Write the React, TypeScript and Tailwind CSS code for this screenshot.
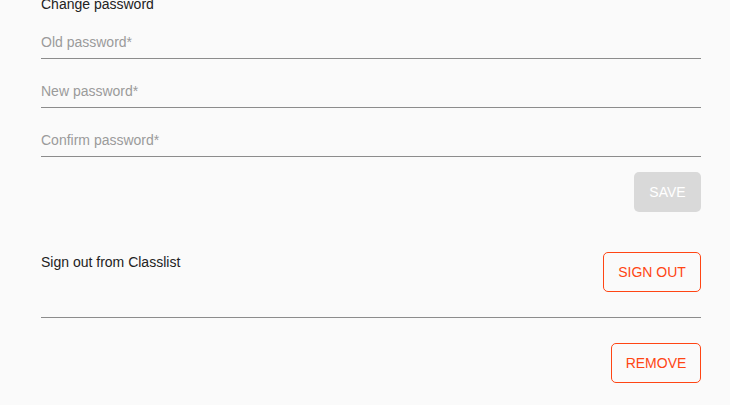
import React from "react";

const fields = ["Old password*", "New password*", "Confirm password*"];

export default function App() {
  return (
    <div className="min-h-[405px] w-[730px] bg-[#fafafa] font-['Liberation_Sans',Arial,sans-serif] overflow-hidden">
      <div className="pl-[41px] pr-[29px] mt-[-6px]">
        <div className="text-[14px] leading-[20px] text-[#222]">Change password</div>

        <div className="mt-[18px] flex flex-col gap-[22px]">
          {fields.map((f) => (
            <input
              key={f}
              type="password"
              placeholder={f}
              className="h-[27px] w-full bg-transparent pb-[6px] text-[14px] leading-[20px] text-[#333] placeholder:text-[#9b9b9b] border-b border-[#8c8c8c] outline-none"
            />
          ))}
        </div>

        <div className="mt-[15px] flex justify-end">
          <button className="h-[40px] w-[67px] rounded-[5px] bg-[#d9d9d9] text-[14px] text-white">
            SAVE
          </button>
        </div>

        <div className="mt-[40px] flex items-start justify-between border-b border-[#8c8c8c] pb-[25px]">
          <span className="text-[14px] leading-[20px] text-[#222]">Sign out from Classlist</span>
          <button className="h-[40px] w-[98px] rounded-[5px] border border-[#ff4514] text-[14px] text-[#ff4514]">
            SIGN OUT
          </button>
        </div>

        <div className="mt-[25px] flex justify-end">
          <button className="h-[40px] w-[90px] rounded-[5px] border border-[#ff4514] text-[14px] text-[#ff4514]">
            REMOVE
          </button>
        </div>
      </div>
    </div>
  );
}
